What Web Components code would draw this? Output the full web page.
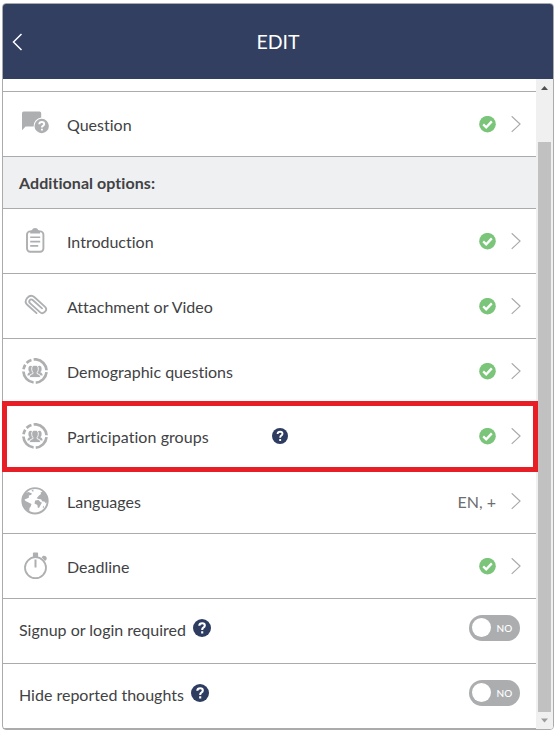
<!DOCTYPE html>
<html lang="en">
<head>
<meta charset="utf-8">
<title>Edit</title>
<style>
html, body { margin: 0; height: 100%; background: #fff; }
body { font-family: Lato, "Open Sans", sans-serif; font-size: 16px; color: #414244; overflow: hidden; font-variant-ligatures: none; }
</style>
</head>
<body>
<edit-panel heading="EDIT">
  <option-row stub></option-row>
  <option-row icon="question" label="Question" done></option-row>
  <section-title>Additional options:</section-title>
  <option-row icon="clipboard" label="Introduction" done></option-row>
  <option-row icon="clip" label="Attachment or Video" done></option-row>
  <option-row icon="people" label="Demographic questions" done></option-row>
  <option-row icon="people" label="Participation groups" done highlighted><help-badge size="16"></help-badge></option-row>
  <option-row icon="globe" label="Languages" value="EN, +"></option-row>
  <option-row icon="timer" label="Deadline" done></option-row>
  <toggle-row>Signup or login required</toggle-row>
  <toggle-row>Hide reported thoughts</toggle-row>
</edit-panel>
<script>
const ICONS = {
  question: `<path d="M1 2.200Q1 .5 2.700 .5H18.500Q20.200 .5 20.200 2.200V6.600A8.400 8.400 0 0 0 12.600 15.500H4.600L1 19.300V2.200Z"/><circle cx="20.700" cy="15" r="7.200"/><path d="M18.300 13.200Q18.300 11 20.800 11Q23.200 11 23.200 13Q23.200 14.100 21.900 14.900Q20.900 15.500 20.900 16.600M20.900 17.800V19.600" fill="none" stroke="#fff" stroke-width="1.900"/>`,
  clipboard: `<rect x="6" y="3.400" width="16.400" height="20.400" rx="3.200" fill="none" stroke="currentColor" stroke-width="1.900"/><path d="M9.200 5.400V3.600Q9.200 2.400 10.800 2.300Q11.700 0 14.100 0Q16.500 0 17.400 2.300Q19 2.400 19 3.600V5.400Z"/><path d="M9.200 9.300H19.200M9.200 13.600H19.200M9.200 17.900H17.200" fill="none" stroke="currentColor" stroke-width="1.600"/>`,
  clip: `<g fill="none" stroke="currentColor" stroke-width="2" stroke-linecap="round" transform="translate(14.800 12.200) rotate(42) scale(.9)"><path d="M6.500 6H-7Q-12.500 6-12.500 .2Q-12.500-5.600-7-5.600H8.500Q12.500-5.600 12.500-1.500Q12.500 2.600 8.500 2.600H-6Q-8.800 2.600-8.800 .2Q-8.800-2-6-2H7.500"/></g>`,
  people: `<g transform="translate(14 13)"><circle r="11.600" pathLength="360" fill="none" stroke="currentColor" stroke-width="2.700" stroke-dasharray="80 11 80 12 24 11 28 11 93 10" transform="rotate(6)"/><ellipse cx="-4.300" cy="-2" rx="2.300" ry="3.200"/><ellipse cx="4.300" cy="-2" rx="2.300" ry="3.200"/><path d="M-7.600 4.400Q-7.600 1.600-4.800 1H4.800Q7.600 1.600 7.600 4.400Z"/><path d="M0-5.800C2.500-5.800 3.500-4.200 3.300-1.700C3.100 .1 2.500 1 2 1.600V2.500Q5.800 3.100 5.800 6.600H-5.800Q-5.800 3.100-2 2.500V1.600C-2.500 1-3.100 .1-3.300-1.700C-3.500-4.200-2.500-5.800 0-5.800Z" stroke="#fff" stroke-width=".9"/></g>`,
  globe: `<circle cx="14" cy="12.800" r="12.700" fill="none" stroke="currentColor" stroke-width="1.900"/><path d="M4 5L7.500 4L11 5.500L10 7L7.700 7.500L8 9.500L6 10.500L3.500 11.500L4.500 13L7.500 14.500L10.500 16L9.500 19L8.500 20L8.300 23.700Q1 20 1 12Q1.400 7.800 4 5Z"/><path d="M10.500 2.500L12.500 1.500L12.200 4Z"/><path d="M18 7.500L20 6L19.500 4.500L22 3.500Q26.500 7 26.500 13L25 15.500L23.300 13.500L21.500 13.500L20 11.300L17.500 11L15.700 10.200ZM14.200 12.500L17.500 12L19.700 14.300L21 14.500L19.300 17.500L18 20L16.700 19.500L16.400 17L13.500 15.500Z"/><path d="M21.500 19.300L23 17.500L22.800 20Z"/>`,
  timer: `<circle cx="14.500" cy="14.700" r="10.500" fill="none" stroke="currentColor" stroke-width="1.800"/><path d="M11.900 .2Q11.900-.6 12.700-.6H16.300Q17.100-.6 17.100 .2V4H11.900ZM20.500 4.300L22.300 2.700Q24.300 2.500 25.400 4Q26.200 5.400 25.400 6.700L24 8ZM13.500 6.600H15.500V14.600H13.500Z"/>`
};

function define(name, markup, after) {
  const template = document.createElement('template');
  template.innerHTML = markup;
  customElements.define(name, class extends HTMLElement {
    connectedCallback() {
      if (this.shadowRoot) return;
      const content = template.content.cloneNode(true);
      if (after) after(this, content);
      this.attachShadow({ mode: 'open' }).append(content);
    }
  });
}

define('line-icon', `<style>
  :host { display: block; width: 28px; height: 26px; color: #adafb1; }
  svg { display: block; overflow: visible; fill: currentColor; }
</style><svg width="28" height="26" viewBox="0 0 28 26"></svg>`,
(el, root) => { root.querySelector('svg').innerHTML = ICONS[el.getAttribute('name')] || ''; });

define('help-badge', `<style>
  :host { display: block; color: #2d3c60; }
  svg { display: block; }
</style><svg viewBox="0 0 18 18"><circle cx="9" cy="9" r="9" fill="currentColor"/><path d="M6.300 6.800Q6.300 4.200 9.200 4.200Q11.800 4.200 11.800 6.400Q11.800 7.700 10.300 8.600Q9.200 9.300 9.200 10.900M9.200 12.300V14.500" fill="none" stroke="#fff" stroke-width="2.100"/></svg>`,
(el, root) => {
  const svg = root.querySelector('svg'), size = el.getAttribute('size') || 18;
  svg.setAttribute('width', size);
  svg.setAttribute('height', size);
});

define('check-badge', `<style>:host { display: block; } svg { display: block; }</style>
<svg width="17" height="17" viewBox="0 0 17 17"><circle cx="8.500" cy="8.200" r="8.300" fill="#7bc57a"/><path d="M4.200 8.400L7.200 11.300L12.800 5.400" fill="none" stroke="#fff" stroke-width="2.300"/></svg>`);

define('section-title', `<style>
  :host { display: flex; align-items: center; box-sizing: border-box; height: 52px; padding: 1px 0 0 16px;
    background: #eff0f2; border-bottom: 1px solid #a9abad; font-weight: 700; line-height: 20px; letter-spacing: .06px; }
</style><slot></slot>`);

define('option-row', `<style>
  :host { display: flex; align-items: center; position: relative; box-sizing: border-box; height: 65px;
    padding: 0 15px 1px 18px; border-bottom: 1px solid #a9abad; }
  :host([stub]) { height: 13px; padding: 0; }
  :host([stub]) .end, :host([stub]) line-icon, :host([stub]) .label { display: none; }
  :host([highlighted])::after { content: ""; position: absolute; z-index: 1; inset: -3px -2px -4px -1px;
    border: 5px solid #e81e26; }
  line-icon { margin-right: 18px; }
  .label { width: 205px; line-height: 20px; padding-top: 2px; white-space: nowrap; }
  :host([highlighted]) .label { letter-spacing: .07px; }
  .end { margin-left: auto; display: flex; align-items: center; padding-top: 1px; }
  .value { color: #6c6e70; padding-top: 1px; line-height: 20px; margin-right: 15px; }
  check-badge { margin-right: 15px; }
  .arrow { display: block; }
</style>
<line-icon></line-icon><span class="label"></span><slot></slot>
<span class="end"><svg class="arrow" width="10" height="17" viewBox="0 0 10 17"><path d="M.7 .3L9 8.100L.7 15.900" fill="none" stroke="#a7a9ac" stroke-width="1.200"/></svg></span>`,
(el, root) => {
  root.querySelector('line-icon').setAttribute('name', el.getAttribute('icon'));
  root.querySelector('.label').textContent = el.getAttribute('label');
  const end = root.querySelector('.end');
  if (el.hasAttribute('done')) end.prepend(document.createElement('check-badge'));
  if (el.hasAttribute('value')) {
    const value = document.createElement('span');
    value.className = 'value';
    value.textContent = el.getAttribute('value');
    end.prepend(value);
  }
});

define('toggle-row', `<style>
  :host { display: flex; align-items: center; box-sizing: border-box; height: 65px;
    padding: 0 16px 7px 16px; border-bottom: 1px solid #a9abad; }
  .label { line-height: 20px; padding-top: 4px; margin-right: 7.500px; }
  .switch { margin-left: auto; display: flex; align-items: center; box-sizing: border-box; width: 51px; height: 26px;
    border-radius: 13px; background: #abadaf; color: #fff; padding: 0 7.500px 0 3px; justify-content: space-between; line-height: 14px; }
  .knob { width: 19px; height: 19px; border-radius: 50%; background: #fff; }
  .state { padding-top: 1px; font-size: 10px; font-weight: 500; letter-spacing: .2px; }
</style><span class="label"><slot></slot></span><help-badge></help-badge>
<span class="switch"><span class="knob"></span><span class="state">NO</span></span>`);

define('scroll-track', `<style>
  :host { display: flex; flex-direction: column; align-items: center; width: 17px; background: #f0f0f1; border-radius: 0 0 3px 0; }
  svg { display: block; flex: none; }
  .thumb { flex: 1; width: 13px; margin: 46px 0 0; background: #c1c1c1; }
</style>
<svg width="17" height="17" viewBox="0 0 17 17"><path d="M5 11L8.500 7L12 11Z" fill="#505050"/></svg>
<div class="thumb"></div>
<svg width="17" height="17" viewBox="0 0 17 17"><path d="M5 6.500H12L8.500 10.500Z" fill="#9c9c9c"/></svg>`);

define('edit-panel', `<style>
  :host { display: flex; flex-direction: column; box-sizing: border-box; width: 552px; height: 727px;
    margin: 3px 0 0 2px; border: 1px solid #a9abad; border-radius: 4px; }
  header { display: grid; grid-template-columns: 40px 1fr 40px; align-items: center; flex: none; height: 75px;
    background: #323f60; color: #fff; border-radius: 3px 3px 0 0; }
  header svg { display: block; margin-left: 9px; }
  h1 { margin: 0; padding-top: 1px; text-align: center; font-size: 19.500px; line-height: 22px; font-weight: 400; }
  .body { display: flex; flex: 1; min-height: 0; }
  .rows { flex: 1; }
</style>
<header><svg width="11" height="18" viewBox="0 0 11 18"><path d="M9.500 1L1.500 9L9.500 17" fill="none" stroke="#fff" stroke-width="1.500"/></svg><h1></h1></header>
<div class="body"><div class="rows"><slot></slot></div><scroll-track></scroll-track></div>`,
(el, root) => {
  root.querySelector('h1').textContent = el.getAttribute('heading');
});
</script>
</body>
</html>
